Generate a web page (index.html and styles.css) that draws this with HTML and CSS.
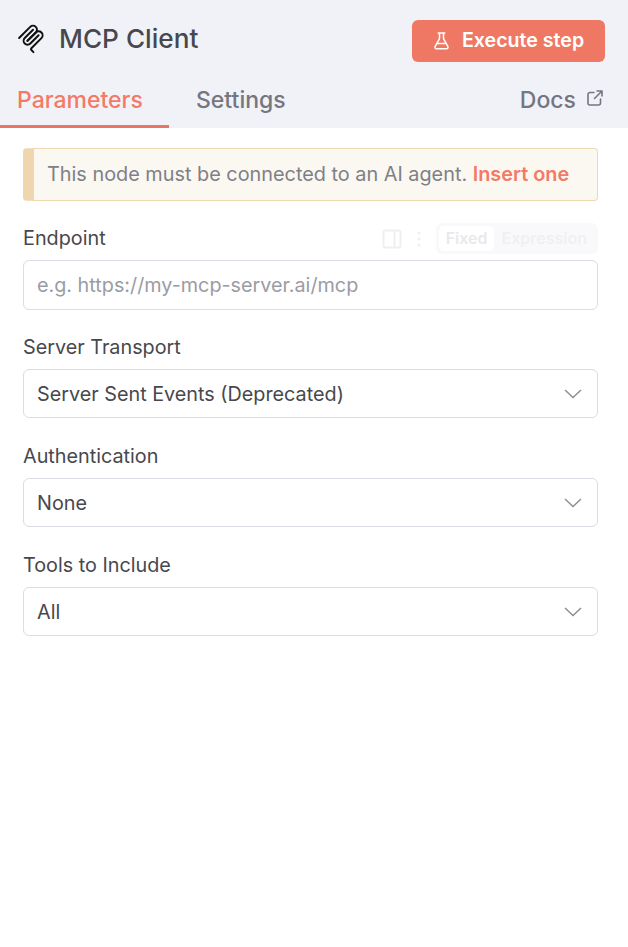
FILE: index.html
```html
<!DOCTYPE html>
<html lang="en">
<head>
    <meta charset="UTF-8">
    <meta name="viewport" content="width=device-width, initial-scale=1.0">
    <title>MCP Client</title>
    <link rel="stylesheet" href="styles.css">
</head>
<body>
    <header class="node-header">
        <div class="title-row">
            <div class="node-title">
                <svg class="node-icon" viewBox="0 0 195 195" fill="none" stroke="#101010" stroke-width="12" stroke-linecap="round">
                    <path d="M25 97.85L92.88 29.97C102.26 20.6 117.45 20.6 126.82 29.97C136.2 39.34 136.2 54.54 126.82 63.91L75.56 115.18"/>
                    <path d="M76.27 114.47L126.82 63.91C136.2 54.54 151.39 54.54 160.77 63.91L161.12 64.27C170.49 73.64 170.49 88.83 161.12 98.21L99.72 159.6C96.6 162.72 96.6 167.79 99.72 170.91L112.33 183.52"/>
                    <path d="M109.85 46.94L59.65 97.15C50.28 106.52 50.28 121.71 59.65 131.09C69.02 140.46 84.22 140.46 93.59 131.09L143.79 80.88"/>
                </svg>
                <span>MCP Client</span>
            </div>
            <button class="run-btn">
                <svg class="flask" viewBox="0 0 15 18" fill="none" stroke="#fff" stroke-width="1.5" stroke-linecap="round" stroke-linejoin="round">
                    <path d="M4.2 1 h6.6 M5.5 1 v5.6 L1.2 14.4 a1.6 1.6 0 0 0 1.4 2.4 h9.8 a1.6 1.6 0 0 0 1.4 -2.4 L9.5 6.6 V1 M3.4 11.6 h8.2"/>
                </svg>
                <span class="run-label">Execute step</span>
            </button>
        </div>
        <nav class="tabs">
            <a class="tab active">Parameters</a>
            <a class="tab">Settings</a>
            <a class="tab docs">Docs
                <svg class="ext" viewBox="0 0 18 18" fill="none" stroke="#747680" stroke-width="1.6" stroke-linecap="round" stroke-linejoin="round">
                    <path d="M8 3.5 H4 a2 2 0 0 0 -2 2 V14 a2 2 0 0 0 2 2 h8.5 a2 2 0 0 0 2 -2 V10 M8.5 9.5 L16 2 M11 2 h5 v5"/>
                </svg>
            </a>
        </nav>
    </header>

    <main class="params">
        <div class="callout">
            This node must be connected to an AI agent. <a class="callout-link">Insert one</a>
        </div>

        <div class="field">
            <div class="label-row">
                <label>Endpoint</label>
                <div class="field-opts">
                    <svg class="panel-icon" viewBox="0 0 20 20" fill="none" stroke="#efeff1" stroke-width="2">
                        <rect x="1.5" y="1.5" width="17" height="17" rx="2"/>
                        <path d="M12.5 1.5 v17"/>
                    </svg>
                    <svg class="dots-icon" viewBox="0 0 4 16" fill="#efeff1">
                        <circle cx="2" cy="2" r="1.5"/>
                        <circle cx="2" cy="8" r="1.5"/>
                        <circle cx="2" cy="14" r="1.5"/>
                    </svg>
                    <div class="switch">
                        <span class="switch-item on">Fixed</span>
                        <span class="switch-item">Expression</span>
                    </div>
                </div>
            </div>
            <div class="input placeholder">e.g. https://my-mcp-server.ai/mcp</div>
        </div>

        <div class="field">
            <div class="label-row"><label>Server Transport</label></div>
            <div class="input select">Server Sent Events (Deprecated)
                <svg class="chevron" viewBox="0 0 18 10" fill="none" stroke="#8b8c93" stroke-width="1.4"><path d="M1 1 L9 8.5 L17 1"/></svg>
            </div>
        </div>

        <div class="field">
            <div class="label-row"><label>Authentication</label></div>
            <div class="input select">None
                <svg class="chevron" viewBox="0 0 18 10" fill="none" stroke="#8b8c93" stroke-width="1.4"><path d="M1 1 L9 8.5 L17 1"/></svg>
            </div>
        </div>

        <div class="field">
            <div class="label-row"><label>Tools to Include</label></div>
            <div class="input select">All
                <svg class="chevron" viewBox="0 0 18 10" fill="none" stroke="#8b8c93" stroke-width="1.4"><path d="M1 1 L9 8.5 L17 1"/></svg>
            </div>
        </div>
    </main>
</body>
</html>
```
FILE: styles.css
```css
body {
    margin: 0;
    font-family: Inter, "Liberation Sans", sans-serif;
    background-color: white;
    color: #47484d;
}

.node-header {
    height: 128px;
    background-color: #f0f2f8;
    box-sizing: border-box;
    padding-top: 20px;
}

.title-row {
    display: flex;
    justify-content: space-between;
    align-items: flex-start;
    height: 42px;
    padding: 0 23px 0 15px;
}

.node-title {
    display: flex;
    align-items: center;
    gap: 12px;
    height: 36px;
    font-size: 26.2px;
    font-weight: 500;
    color: #47484d;
}

.node-icon {
    width: 32px;
    height: 32px;
}

.run-btn {
    display: flex;
    align-items: center;
    gap: 13px;
    width: 193px;
    height: 42px;
    padding: 0 0 0 22px;
    background-color: #ef7864;
    color: white;
    border: none;
    border-radius: 6px;
    font-family: inherit;
    font-size: 19.6px;
    font-weight: 600;
}

.run-label {
    padding-bottom: 2px;
}

.flask {
    width: 15px;
    height: 18px;
}

.tabs {
    display: flex;
    height: 66px;
    align-items: flex-end;
}

.tab {
    display: flex;
    align-items: center;
    box-sizing: border-box;
    height: 50px;
    padding-bottom: 7px;
    font-size: 23px;
    font-weight: 500;
    color: #747680;
}

.tab.active {
    width: 169px;
    padding-left: 17px;
    padding-bottom: 4px;
    color: #f47a66;
    border-bottom: 3px solid #ea7562;
}

.tab:nth-child(2) {
    margin-left: 27px;
}

.docs {
    margin-left: auto;
    gap: 10px;
    padding-right: 24px;
}

.ext {
    width: 18px;
    height: 18px;
    margin-bottom: 4px;
}

.params {
    padding: 20px 30px 0 23px;
}

.callout {
    box-sizing: border-box;
    height: 53px;
    margin-bottom: 22px;
    line-height: 50px;
    padding-left: 13px;
    background-color: #fbf8f2;
    border: 1px solid #efd9b2;
    border-left: 11px solid #efd6ae;
    border-radius: 4px;
    font-size: 19.85px;
    color: #7e8087;
    white-space: nowrap;
}

.callout-link {
    color: #f47a66;
    font-weight: 600;
}

.field {
    margin-bottom: 23px;
}

.label-row {
    display: flex;
    justify-content: space-between;
    align-items: center;
    box-sizing: border-box;
    height: 37px;
    padding-bottom: 6px;
    font-size: 19.8px;
}

.label-row label {
    padding-bottom: 2px;
}

.field-opts {
    display: flex;
    align-items: center;
}

.panel-icon {
    width: 20px;
    height: 20px;
}

.dots-icon {
    width: 4px;
    height: 16px;
    margin-left: 15px;
}

.switch {
    display: flex;
    align-items: center;
    box-sizing: border-box;
    height: 31px;
    margin-left: 15px;
    padding: 3px 4px 3px 3px;
    background-color: #f9f9fb;
    border-radius: 6px;
    font-size: 16px;
    font-weight: 600;
    color: #f0f0f2;
}

.switch-item {
    padding: 0 7px;
    line-height: 25px;
}

.switch-item.on {
    background-color: white;
    border-radius: 5px;
    color: #e9e9eb;
}

.input {
    display: flex;
    align-items: center;
    justify-content: space-between;
    box-sizing: border-box;
    height: 49px;
    padding: 0 15px 0 13px;
    border: 1px solid #dcdbe6;
    border-radius: 6px;
    font-size: 19.8px;
    color: #47484d;
}

.placeholder {
    height: 50px;
    margin-bottom: -1px;
    color: #9b9ca3;
}

.chevron {
    width: 18px;
    height: 10px;
}
```
